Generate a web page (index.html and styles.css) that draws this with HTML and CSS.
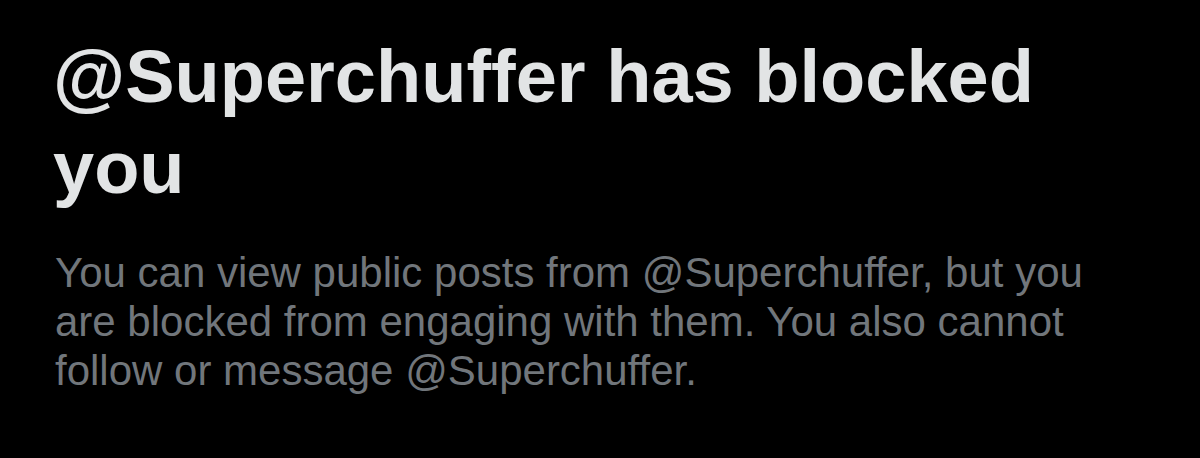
FILE: index.html
```html
<!DOCTYPE html>
<html lang="en">
<head>
<meta charset="utf-8">
<title>Blocked</title>
<link rel="stylesheet" href="styles.css">
</head>
<body>
<main class="notice">
  <h1 class="notice-title">@Superchuffer has blocked you</h1>
  <p class="notice-text">You can view public posts from @Superchuffer, but you are blocked from engaging with them. You also cannot follow or message @Superchuffer.</p>
</main>
</body>
</html>
```
FILE: styles.css
```css
html, body {
  margin: 0;
  padding: 0;
  background: #000;
  height: 100%;
}
.notice {
  padding: 31px 0 0 53px;
  width: 1100px;
  font-family: "Liberation Sans", Arial, sans-serif;
}
.notice-title {
  margin: 0;
  font-size: 74px;
  line-height: 91px;
  font-weight: 700;
  color: #e2e4e5;
}
.notice-text {
  margin: 35px 0 0 2px;
  font-size: 42px;
  line-height: 49px;
  font-weight: 400;
  color: #71767b;
}
```
